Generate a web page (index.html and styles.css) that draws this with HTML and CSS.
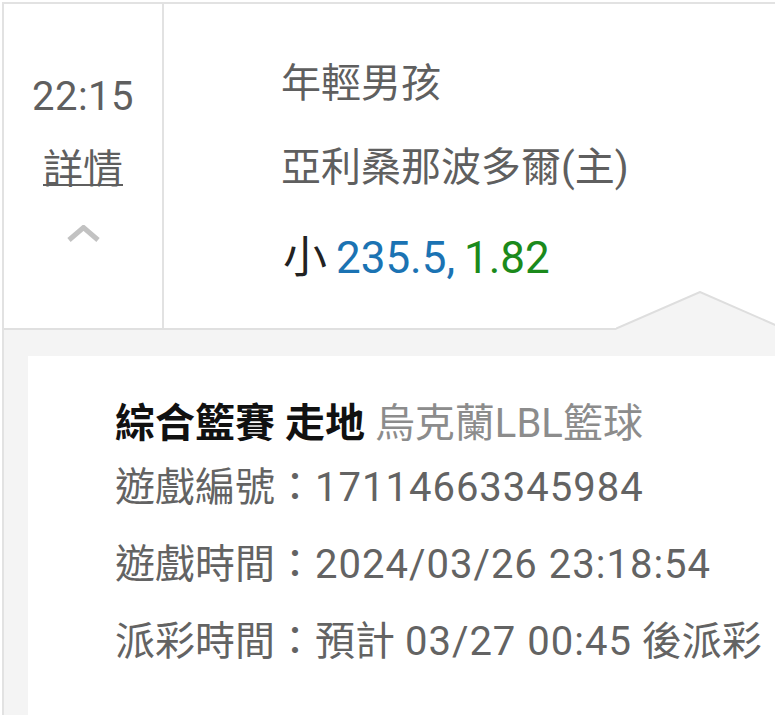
FILE: index.html
```html
<!DOCTYPE html>
<html lang="zh-Hant">
<head>
    <meta charset="UTF-8">
    <meta name="viewport" content="width=device-width, initial-scale=1.0">
    <title>注單詳情</title>
    <link rel="stylesheet" href="styles.css">
</head>
<body>
    <div class="bet">
        <!-- 主列：時間 + 投注內容 -->
        <div class="bet-row">
            <div class="bet-time">
                <div class="time">22:15</div>
                <a class="detail-link" href="#">詳情</a>
                <svg class="chevron" width="33" height="17" viewBox="0 0 33 17">
                    <polyline points="2,15 16.5,2.5 31,15" fill="none" stroke="#c2c2c2" stroke-width="5"/>
                </svg>
            </div>
            <div class="bet-info">
                <div class="line">年輕男孩</div>
                <div class="line">亞利桑那波多爾(主)</div>
                <div class="line odds">小 <span class="handicap">235.5,</span> <span class="price">1.82</span></div>
            </div>
        </div>

        <!-- 展開的詳情 -->
        <div class="bet-detail">
            <svg class="notch" width="180" height="40" viewBox="0 0 180 40">
                <polygon points="0,38 84,1 180,43 180,40 0,40" fill="#f4f4f4"/>
                <polyline points="-2,38.5 84,1 180,43" fill="none" stroke="#dedede" stroke-width="2"/>
            </svg>
            <div class="detail-card">
                <div class="detail-title"><b>綜合籃賽 走地</b> <span class="league">烏克蘭LBL籃球</span></div>
                <div class="detail-line">遊戲編號：<span class="value">17114663345984</span></div>
                <div class="detail-line">遊戲時間：<span class="value">2024/03/26 23:18:54</span></div>
                <div class="detail-line">派彩時間：預計 <span class="value">03/27 00:45</span> 後派彩</div>
            </div>
        </div>
    </div>
</body>
</html>
```

FILE: styles.css
```css
/* Reset básico */
body, div {
    margin: 0;
    padding: 0;
    box-sizing: border-box;
}

body {
    font-family: Roboto, "Noto Sans CJK TC", sans-serif;
    font-size: 40px;
    line-height: 48px;
    background: #fff;
    color: #5f5f5f;
    overflow: hidden;
}

.bet {
    width: 820px;
    margin: 2px 0 0 2px;
    border-top: 2px solid #e2e2e2;
    border-left: 2px solid #e2e2e2;
}

/* Linha principal */
.bet-row {
    display: flex;
    height: 326px;
    border-bottom: 2px solid #e0e0e0;
}

.bet-time {
    width: 160px;
    border-right: 2px solid #e2e2e2;
    display: flex;
    flex-direction: column;
    align-items: center;
    padding-top: 69px;
}

.time {
    letter-spacing: 0.5px;
}

.detail-link {
    margin-top: 25px;
    color: #5f5f5f;
    text-decoration: underline;
    text-decoration-thickness: 2px;
    text-underline-offset: 1px;
}

.chevron {
    display: block;
    margin-top: 31px;
}

.bet-info {
    padding: 56px 0 0 117px;
}

.line + .line {
    margin-top: 36px;
}

.line.odds {
    margin-top: 42px;
    font-size: 44px;
    color: #222;
    padding-left: 2px;
    word-spacing: -2px;
}

.handicap {
    color: #1b73b3;
}

.price {
    color: #1b8a1b;
}

/* Detalhe expandido */
.bet-detail {
    position: relative;
    background: #f4f4f4;
    padding: 26px 0 0 24px;
}

.notch {
    position: absolute;
    top: -39px;
    left: 612px;
}

.detail-card {
    background: #fff;
    padding: 44px 0 49px 87px;
    color: #636363;
}

.detail-title {
    margin-bottom: 16px;
}

.detail-title b {
    color: #111;
}

.league {
    color: #8c8c8c;
}

.detail-line + .detail-line {
    margin-top: 29px;
}

.value {
    letter-spacing: 1px;
}
```
